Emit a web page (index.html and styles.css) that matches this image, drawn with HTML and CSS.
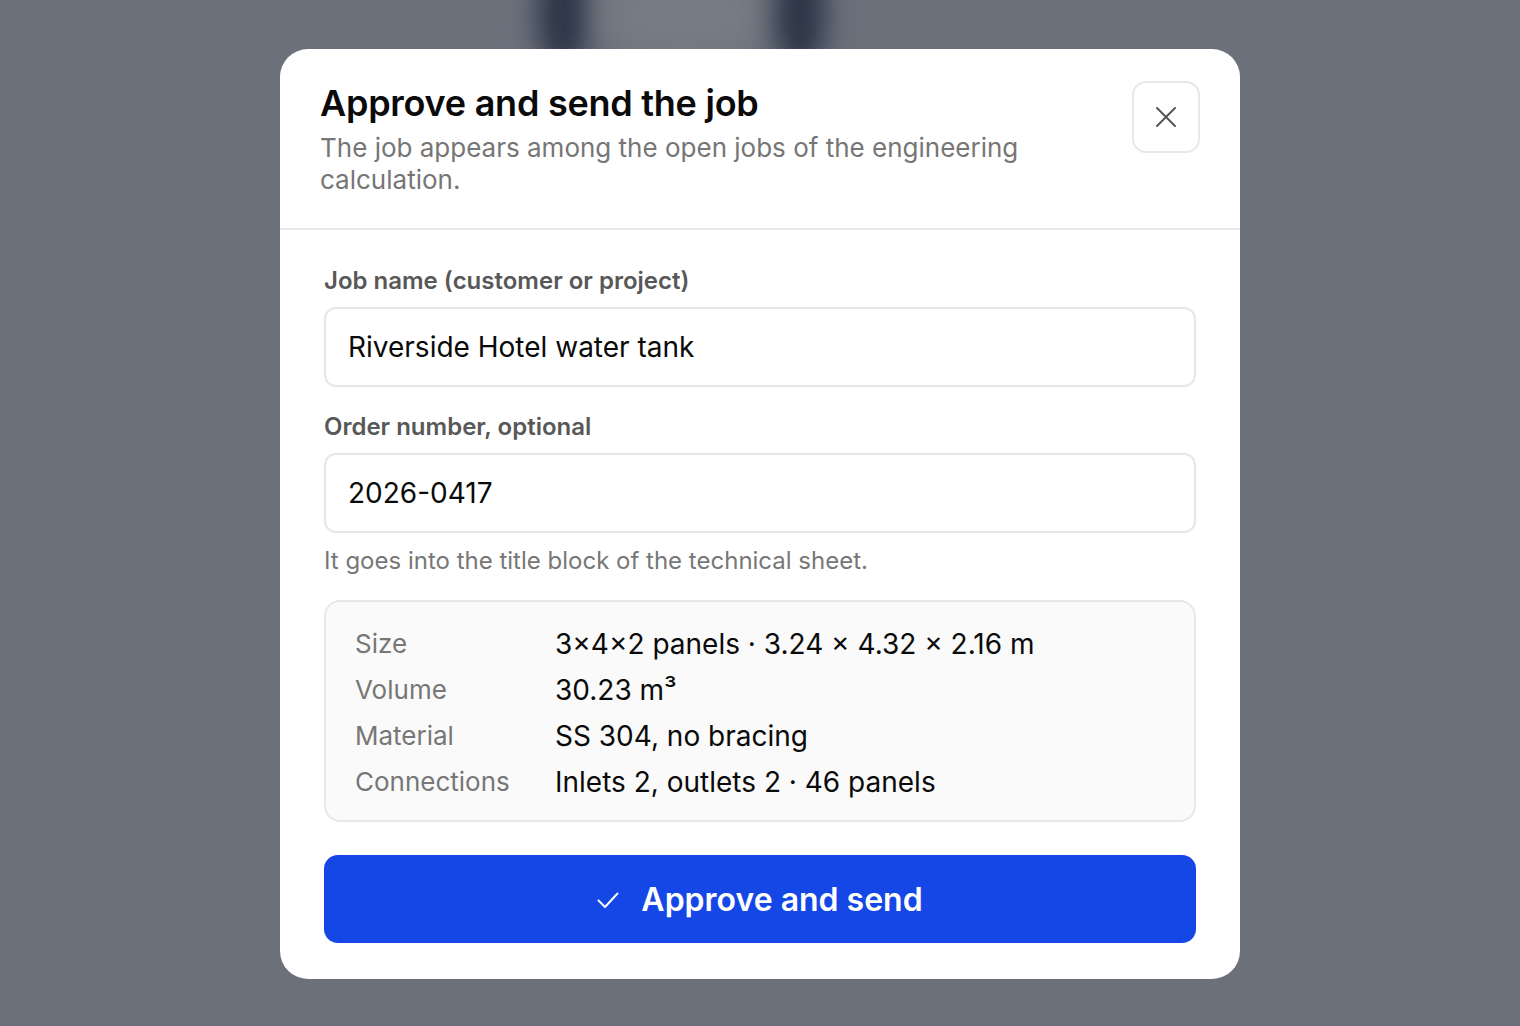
FILE: index.html
```html
<!DOCTYPE html>
<html lang="en">
<head>
<meta charset="utf-8">
<title>Approve and send the job</title>
<link rel="stylesheet" href="styles.css">
</head>
<body>
<div class="backdrop" aria-hidden="true">
  <div class="blob blob-left"></div>
  <div class="blob blob-mid"></div>
  <div class="blob blob-right"></div>
</div>
<div class="overlay">
  <div class="modal" role="dialog" aria-labelledby="dlg-title">
    <header class="modal-header">
      <div class="header-text">
        <h1 id="dlg-title" class="title">Approve and send the job</h1>
        <p class="subtitle">The job appears among the open jobs of the engineering calculation.</p>
      </div>
      <button class="close-btn" aria-label="Close">
        <svg width="24" height="24" viewBox="0 0 24 24" fill="none" stroke="#555" stroke-width="2" stroke-linecap="round"><path d="M3 3 L21 21 M21 3 L3 21"/></svg>
      </button>
    </header>
    <div class="modal-body">
      <div class="field">
        <label class="label">Job name (customer or project)</label>
        <div class="input">Riverside Hotel water tank</div>
      </div>
      <div class="field field-second">
        <label class="label">Order number, optional</label>
        <div class="input">2026-0417</div>
        <p class="hint">It goes into the title block of the technical sheet.</p>
      </div>
      <div class="summary">
        <div class="row"><span class="key">Size</span><span class="val">3×4×2 panels · 3.24 × 4.32 × 2.16 m</span></div>
        <div class="row"><span class="key">Volume</span><span class="val">30.23 m³</span></div>
        <div class="row"><span class="key">Material</span><span class="val">SS 304, no bracing</span></div>
        <div class="row"><span class="key">Connections</span><span class="val">Inlets 2, outlets 2 · 46 panels</span></div>
      </div>
      <button class="primary">
        <svg class="check" width="22" height="20" viewBox="0 0 22 20" fill="none" stroke="#fff" stroke-width="2" stroke-linecap="round" stroke-linejoin="round"><path d="M1.5 10.5 L8 17 L20.5 3.5"/></svg>
        <span>Approve and send</span>
      </button>
    </div>
  </div>
</div>
</body>
</html>
```

FILE: styles.css
```css
* { box-sizing: border-box; }
html, body { margin: 0; padding: 0; }
body {
  width: 1520px;
  height: 1026px;
  overflow: hidden;
  background: #6b707b;
  font-family: Inter, "Noto Sans", "Liberation Sans", sans-serif;
  position: relative;
}
.backdrop {
  position: absolute;
  inset: 0;
  overflow: hidden;
}
.blob {
  position: absolute;
  filter: blur(14px);
  border-radius: 45%;
}
.blob-left { left: 538px; top: -40px; width: 50px; height: 110px; background: #2c3546; }
.blob-mid { left: 600px; top: -30px; width: 170px; height: 90px; background: #777b83; filter: blur(16px); }
.blob-right { left: 775px; top: -40px; width: 50px; height: 110px; background: #2c3546; }
.overlay {
  position: relative;
  height: 100%;
  display: flex;
  justify-content: center;
  padding-top: 49px;
}
.modal {
  width: 960px;
  height: 930px;
  background: #fff;
  border-radius: 28px;
  overflow: hidden;
  display: flex;
  flex-direction: column;
}
.modal-header {
  display: flex;
  justify-content: space-between;
  align-items: flex-start;
  padding: 32px 40px 32px 40px;
  border-bottom: 2px solid #e8e8e8;
}
.header-text { width: 720px; }
.title {
  margin: 0 0 7px 0;
  font-size: 36px;
  line-height: 44px;
  font-weight: 600;
  color: #0a0a0a;
  letter-spacing: -0.25px;
}
.subtitle {
  margin: 0;
  font-size: 26px;
  line-height: 32px;
  color: #767676;
}
.close-btn {
  width: 68px;
  height: 72px;
  border: 2px solid #e8e8e8;
  border-radius: 14px;
  background: #fff;
  display: flex;
  align-items: center;
  justify-content: center;
  padding: 0;
}
.modal-body {
  padding: 35px 44px 0 44px;
  display: flex;
  flex-direction: column;
}
.field { display: flex; flex-direction: column; }
.field-second { margin-top: 24px; }
.label {
  font-size: 24px;
  line-height: 32px;
  font-weight: 600;
  color: #585858;
  margin-bottom: 10px;
}
.input {
  height: 80px;
  border: 2px solid #e6e6e6;
  border-radius: 12px;
  padding: 0 22px;
  display: flex;
  align-items: center;
  font-size: 28px;
  color: #0a0a0a;
}
.hint {
  margin: 12px 0 0 0;
  font-size: 24px;
  line-height: 32px;
  color: #777;
}
.summary {
  margin-top: 23px;
  background: #fafafa;
  border: 2px solid #e8e8e8;
  border-radius: 16px;
  padding: 19px 29px 15px 29px;
  display: flex;
  flex-direction: column;
}
.row {
  display: flex;
  align-items: center;
  height: 46px;
}
.key { width: 200px; color: #777; flex: none; font-size: 26px; line-height: 46px; }
.val { color: #0a0a0a; font-size: 28px; line-height: 46px; }
.primary {
  margin-top: 33px;
  height: 88px;
  border: none;
  border-radius: 14px;
  background: #1447e6;
  color: #fff;
  font-family: inherit;
  font-size: 32px;
  font-weight: 600;
  display: flex;
  align-items: center;
  justify-content: center;
  gap: 22px;
  padding-left: 6px;
}
.check { margin-top: 2px; }
```
